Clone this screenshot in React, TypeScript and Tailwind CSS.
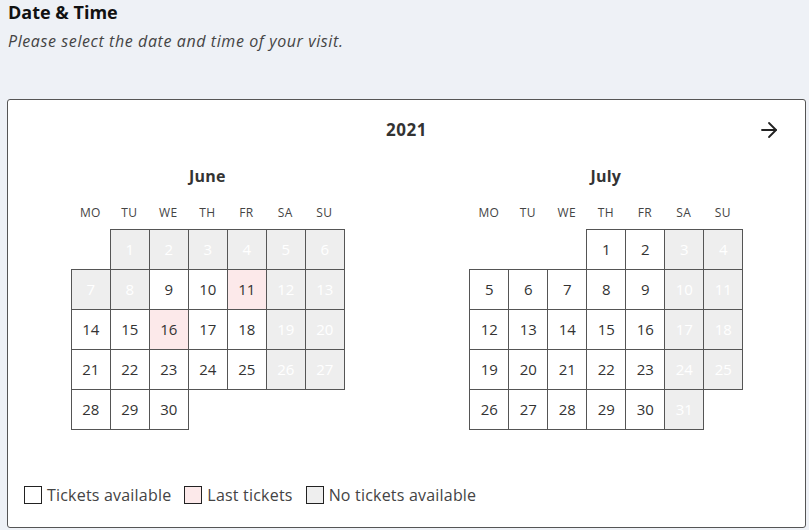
import { ArrowRight } from 'lucide-react'

type Status = 'ok' | 'last' | 'none'

interface Month {
  name: string
  offset: number // empty cells before the 1st (Monday first)
  days: number
  status: (d: number) => Status
}

const WEEKDAYS = ['MO', 'TU', 'WE', 'TH', 'FR', 'SA', 'SU']

const months: Month[] = [
  {
    name: 'June',
    offset: 1,
    days: 30,
    status: (d) => {
      if (d <= 8) return 'none'
      if (d === 11 || d === 16) return 'last'
      const wd = d % 7 // 0 = monday
      if (wd === 5 || wd === 6) return 'none'
      return 'ok'
    },
  },
  {
    name: 'July',
    offset: 3,
    days: 31,
    status: (d) => {
      const wd = (d + 2) % 7
      if (wd === 5 || wd === 6) return 'none'
      return 'ok'
    },
  },
]

const cellColor: Record<Status, string> = {
  ok: 'bg-white text-[#333]',
  last: 'bg-[#fce9ea] text-[#333]',
  none: 'bg-[#eeeeee] text-white',
}

function MonthGrid({ month }: { month: Month }) {
  const cells: (number | null)[] = []
  for (let i = 0; i < month.offset; i++) cells.push(null)
  for (let d = 1; d <= month.days; d++) cells.push(d)

  return (
    <div className="flex flex-col items-center">
      <h3 className="text-[16px] font-bold text-[#333] leading-none tracking-[0.2px]">{month.name}</h3>
      <div className="grid grid-cols-[repeat(7,39px)] mt-[23px] mb-[10px]">
        {WEEKDAYS.map((w) => (
          <span key={w} className="text-center text-[12px] text-[#444] leading-none tracking-[0.3px]">
            {w}
          </span>
        ))}
      </div>
      {/* 日期格子：每格多出1px，与相邻格边框重叠 */}
      <div className="grid grid-cols-[repeat(7,39px)] auto-rows-[40px]">
        {cells.map((d, i) =>
          d === null ? (
            <div key={i} />
          ) : (
            <div
              key={i}
              className={`w-[40px] h-[41px] border border-[#555] flex items-center justify-center text-[15px] ${cellColor[month.status(d)]}`}
            >
              {d}
            </div>
          )
        )}
      </div>
    </div>
  )
}

function Legend() {
  const items = [
    { label: 'Tickets available', color: 'bg-white' },
    { label: 'Last tickets', color: 'bg-[#fce9ea]' },
    { label: 'No tickets available', color: 'bg-[#eeeeee]' },
  ]
  return (
    <div className="flex items-center gap-[13px] pl-[16px]">
      {items.map((it) => (
        <div key={it.label} className="flex items-center gap-[5px]">
          <span className={`w-[18px] h-[18px] border border-[#222] ${it.color}`} />
          <span className="text-[16px] text-[#444] tracking-[0.2px]">{it.label}</span>
        </div>
      ))}
    </div>
  )
}

export default function App() {
  return (
    <div className="w-[809px] h-[530px] bg-[#eef1f6] overflow-hidden font-['Open_Sans','Noto_Sans',sans-serif]">
      <div className="px-[8px] pt-[1px]">
        <h2 className="text-[18px] font-bold text-[#111] leading-[22px]">Date &amp; Time</h2>
        <p className="mt-[8px] text-[16px] italic text-[#444] leading-[20px] tracking-[0.6px]">
          Please select the date and time of your visit.
        </p>
      </div>

      <div className="mt-[48px] ml-[7px] mr-[3px] h-[429px] bg-white border border-[#555] rounded-[3px] flex flex-col">
        <div className="relative flex items-center justify-center pt-[20px]">
          <span className="text-[17px] font-bold text-[#333] leading-[20px] tracking-[0.5px]">2021</span>
          <ArrowRight className="absolute right-[24px] top-[18px] w-[24px] h-[24px] text-[#222]" strokeWidth={1.8} />
        </div>

        <div className="flex justify-around mt-[28px]">
          {months.map((m) => (
            <MonthGrid key={m.name} month={m} />
          ))}
        </div>

        <div className="mt-auto mb-[20px]">
          <Legend />
        </div>
      </div>
    </div>
  )
}
